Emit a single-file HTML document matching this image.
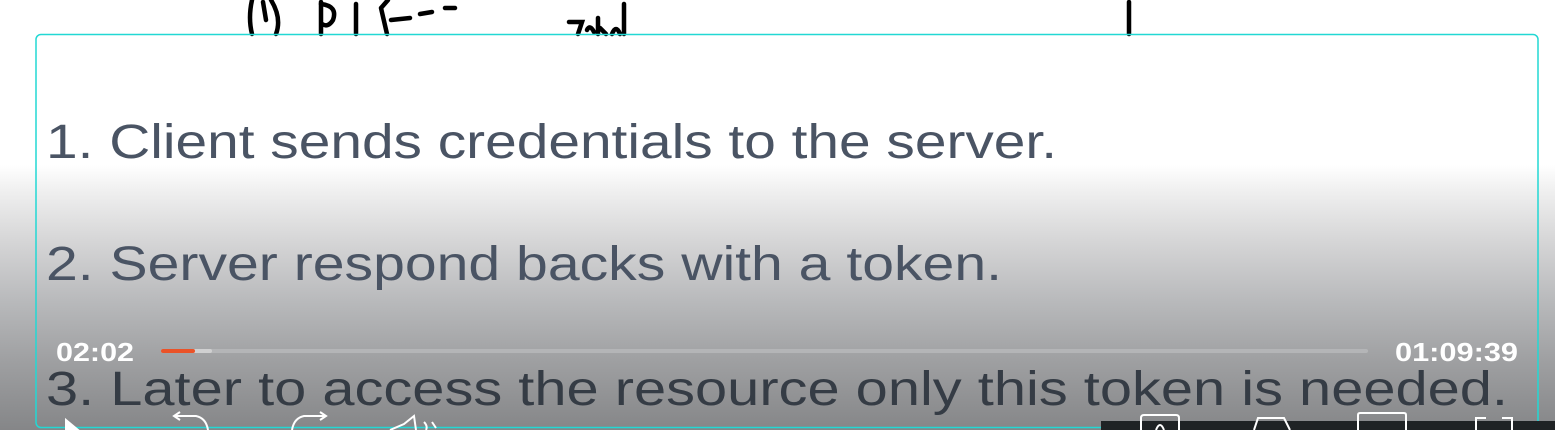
<!DOCTYPE html>
<html><head><meta charset="utf-8"><style>
html,body{margin:0;padding:0;width:1555px;height:430px;overflow:hidden;background:#fff}
.bg{position:absolute;left:0;top:0;width:1555px;height:430px;background:linear-gradient(to bottom,#fff 0,#fff 165px,#f0f0f0 190px,#d6d6d7 240px,#b9babc 300px,#9fa0a2 360px,#858688 430px)}
svg{position:absolute;left:0;top:0}
</style></head><body>
<div class="bg"></div>
<svg width="1555" height="430" viewBox="0 0 1555 430">
 <g fill="none" stroke="#000" stroke-width="4.5" stroke-linecap="round">
  <path d="M252 0 Q248 18 252 34"/>
  <path d="M263 2 L266 20"/>
  <path d="M271 0 Q282 18 276 34"/>
  <path d="M321 2 L321 34"/>
  <path d="M321 4 Q338 6 333 20 Q328 28 322 24"/>
  <path d="M356 4 L356 34"/>
  <path d="M381 8 L388 0 M381 8 L387 34"/>
  <path d="M391 20 L410 18 M420 14 L432 12 M445 8 L455 8"/>
  <path d="M569 22 L582 22 L578 34 M587 30 Q590 24 594 32 M598 18 L598 34 M600 28 L606 34 M612 34 Q616 24 620 34 M624 4 L624 34"/>
  <path d="M1129 2 L1129 34"/>
 </g>
 <rect x="36" y="34.5" width="1502" height="393" rx="5" fill="none" stroke="#22d8d4" stroke-width="1.5"/>
 <g font-family="Liberation Sans, sans-serif" font-size="48" fill="#4a5464">
  <text x="46" y="158" textLength="1011" lengthAdjust="spacingAndGlyphs">1. Client sends credentials to the server.</text>
  <text x="46" y="280" textLength="956" lengthAdjust="spacingAndGlyphs">2. Server respond backs with a token.</text>
  <text x="46" y="405" fill="#353c45" textLength="1462" lengthAdjust="spacingAndGlyphs">3. Later to access the resource only this token is needed.</text>
 </g>
 <rect x="161" y="349" width="1207" height="4" rx="2" fill="#b4b5b7"/>
 <rect x="161" y="349" width="51" height="4" rx="2" fill="#d0d0d1"/>
 <rect x="161" y="349" width="34" height="4" rx="2" fill="#ea5228"/>
 <g font-family="Liberation Sans, sans-serif" font-size="26" font-weight="bold" fill="#fff">
  <text x="56" y="361" textLength="78" lengthAdjust="spacingAndGlyphs">02:02</text>
  <text x="1395" y="361" textLength="123" lengthAdjust="spacingAndGlyphs">01:09:39</text>
 </g>
 <rect x="1101" y="421" width="454" height="9" fill="#1f2325"/>
 <g fill="none" stroke="#fff" stroke-width="2">
  <path d="M66 430 L66 420 L78 430 Z" fill="#fff"/>
  <path d="M180 420 L174 416 L180 412 M174 416 L196 416 Q206 418 208 430"/>
  <path d="M320 420 L326 416 L320 412 M326 416 L304 416 Q294 418 292 430"/>
  <path d="M390 430 L404 424 L414 416 L416 430 M424 422 Q428 426 426 430 M432 422 L436 428"/>
  <path d="M1141 430 L1141 418 Q1141 415 1144 415 L1176 415 Q1179 415 1179 418 L1179 430 M1156 430 Q1160 420 1164 430"/>
  <path d="M1254 430 L1258 418 L1284 418 L1290 430"/>
  <path d="M1358 430 L1358 415 Q1358 413 1360 413 L1404 413 Q1406 413 1406 415 L1406 430"/>
  <path d="M1476 430 L1476 418 L1486 418 M1502 418 L1512 418 L1512 430"/>
 </g>
</svg>
</body></html>
